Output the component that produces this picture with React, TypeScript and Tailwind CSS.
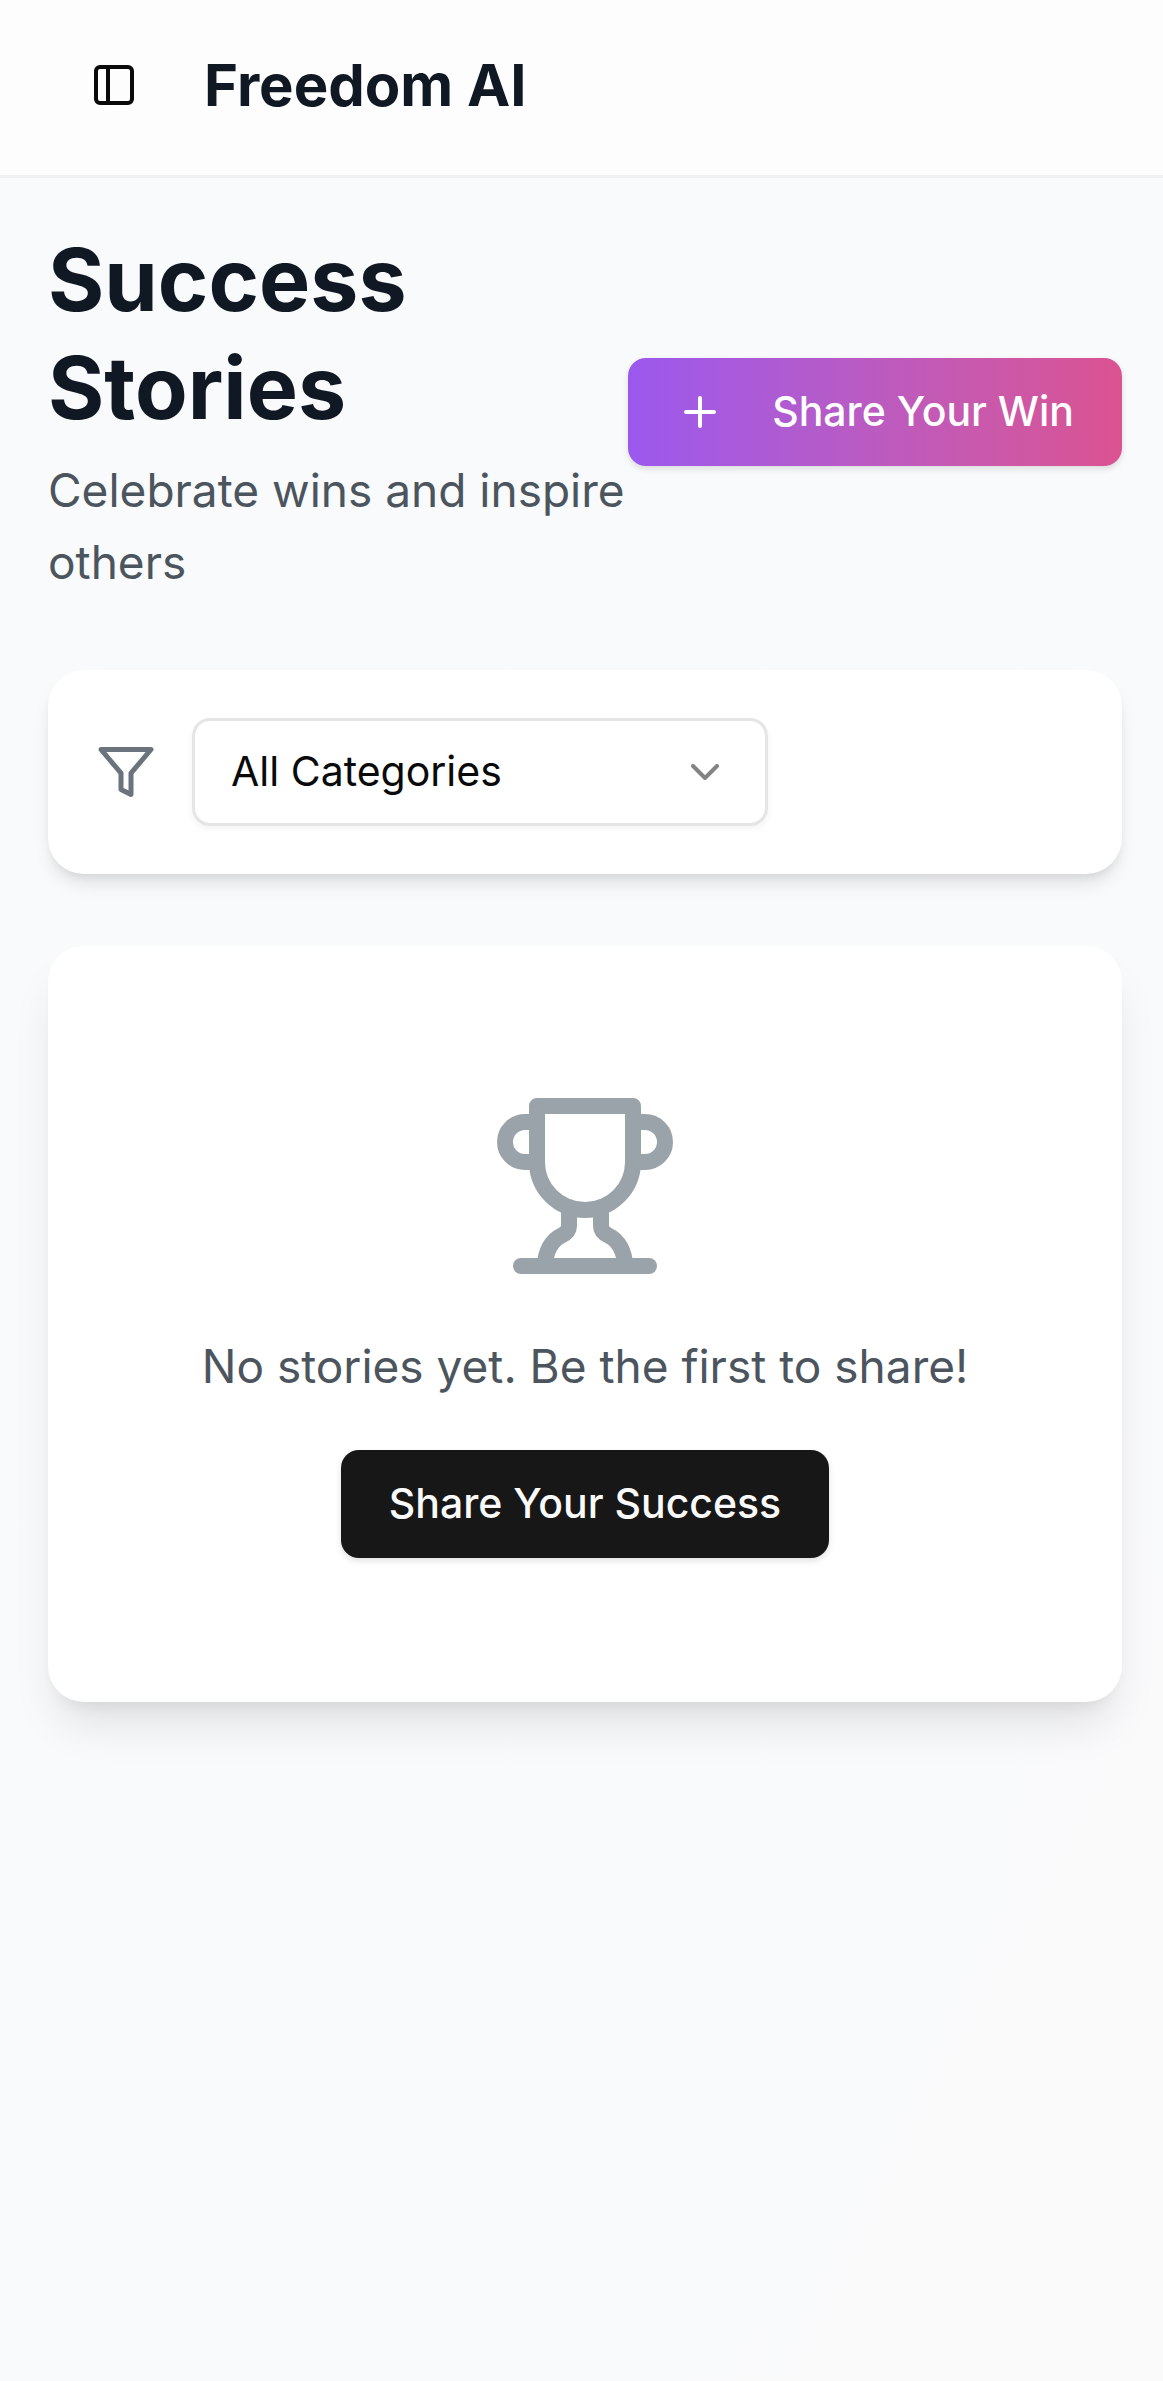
import React from "react";

const iconProps = {
  viewBox: "0 0 24 24",
  fill: "none",
  stroke: "currentColor",
  strokeWidth: 2,
  strokeLinecap: "round" as const,
  strokeLinejoin: "round" as const,
  "aria-hidden": true,
};

function PanelIcon() {
  return (
    <svg {...iconProps} className="size-12">
      <rect width="18" height="18" x="3" y="3" rx="2" />
      <path d="M9 3v18" />
    </svg>
  );
}

function PlusIcon() {
  return (
    <svg {...iconProps} className="size-12 shrink-0">
      <path d="M5 12h14M12 5v14" />
    </svg>
  );
}

function FilterIcon() {
  return (
    <svg {...iconProps} className="size-15 shrink-0 text-[#6b747d]">
      <polygon points="22 3 2 3 10 12.46 10 19 14 21 14 12.46 22 3" />
    </svg>
  );
}

function ChevronIcon() {
  return (
    <svg
      {...iconProps}
      className="pointer-events-none absolute inset-y-0 right-[39px] my-auto size-12 text-[#0a0a0a] opacity-50"
    >
      <path d="m6 9 6 6 6-6" />
    </svg>
  );
}

function TrophyIcon() {
  return (
    <svg {...iconProps} className="size-48 text-[#9ba3aa]">
      <path d="M6 9H4.5a2.5 2.5 0 0 1 0-5H6" />
      <path d="M18 9h1.5a2.5 2.5 0 0 0 0-5H18" />
      <path d="M4 22h16" />
      <path d="M10 14.66V17c0 .55-.47.98-.97 1.21C7.85 18.75 7 20.24 7 22" />
      <path d="M14 14.66V17c0 .55.47.98.97 1.21C16.15 18.75 17 20.24 17 22" />
      <path d="M18 2H6v7a6 6 0 0 0 12 0V2Z" />
    </svg>
  );
}

export default function App() {
  return (
    <div className="flex min-h-screen flex-col bg-linear-to-br from-[#f8fafc] via-[#f8fafc] to-[#fafafa] font-['Inter','Liberation_Sans',sans-serif] text-[#0a0a0a]">
      <header className="flex items-center gap-12 border-b-3 border-[#f0f1f3] bg-[#fdfdfe] px-18 pt-[43px] pb-12">
        <button type="button" aria-label="Toggle sidebar" className="flex size-21 items-center justify-center rounded-[18px]">
          <PanelIcon />
        </button>
        <p className="text-[58px] leading-[84px] font-bold text-[#101824]">Freedom AI</p>
      </header>

      <main className="flex flex-col gap-18 py-12 pr-[41px] pl-12">
        <div className="flex items-center justify-between">
          <div className="min-w-0 flex-1">
            <h1 className="text-[86px] leading-[108px] font-bold text-[#101824]">Success Stories</h1>
            <p className="mt-3 text-[46px] leading-[72px] text-[#4c555e]">Celebrate wins and inspire others</p>
          </div>
          <button
            type="button"
            className="flex h-27 shrink-0 items-center gap-12 rounded-[18px] bg-linear-to-r from-[#9b58ee] to-[#db5290] px-12 text-[41px] font-medium whitespace-nowrap text-white shadow-[0_3px_6px_rgba(0,0,0,0.12)]"
          >
            <PlusIcon />
            Share Your Win
          </button>
        </div>

        <section className="flex items-center gap-9 rounded-[36px] bg-white p-12 shadow-[0_12px_18px_-3px_rgba(0,0,0,0.1),0_6px_12px_-6px_rgba(0,0,0,0.1)]">
          <FilterIcon />
          <div className="relative w-144">
            <select
              aria-label="Category"
              className="h-27 w-full appearance-none rounded-[18px] border-3 border-[#e5e5e5] bg-white px-9 text-[41px] shadow-[0_3px_6px_rgba(0,0,0,0.05)]"
            >
              <option>All Categories</option>
            </select>
            <ChevronIcon />
          </div>
        </section>

        <section className="flex flex-col items-center gap-12 rounded-[36px] bg-white px-12 py-36 shadow-[0_30px_45px_-9px_rgba(0,0,0,0.1),0_12px_18px_-12px_rgba(0,0,0,0.1)]">
          <TrophyIcon />
          <p className="text-center text-[46px] leading-[72px] text-[#4c555e]">No stories yet. Be the first to share!</p>
          <button
            type="button"
            className="h-27 rounded-[18px] bg-[#171717] px-12 text-[41px] font-medium text-[#fafafa] shadow-[0_3px_6px_rgba(0,0,0,0.12)]"
          >
            Share Your Success
          </button>
        </section>
      </main>
    </div>
  );
}
